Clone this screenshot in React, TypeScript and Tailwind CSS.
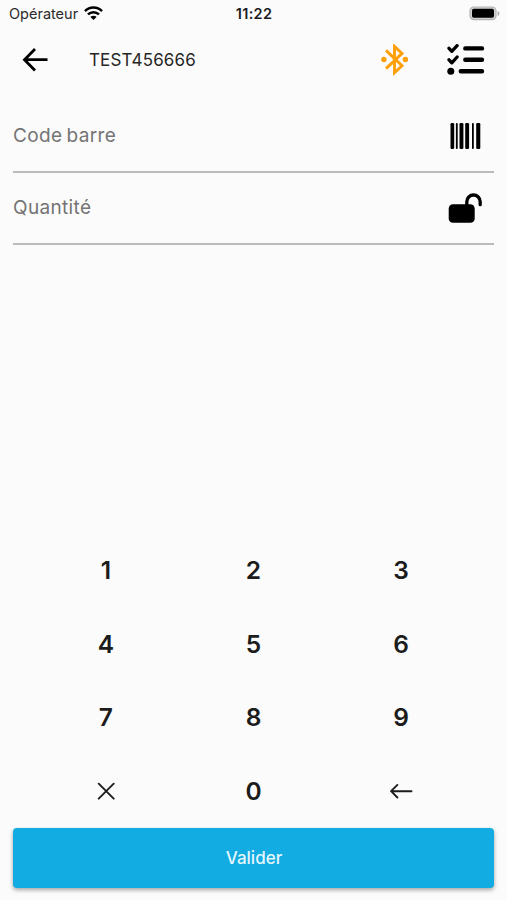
import React from 'react';

const KEYS = ['1', '2', '3', '4', '5', '6', '7', '8', '9', 'clear', '0', 'back'];

const WifiIcon = () => (
  <svg width="19" height="15" viewBox="0 0 19 15" fill="none" stroke="#000" strokeWidth="2.5">
    <path d="M1 5.1a12 12 0 0 1 17 0" />
    <path d="M4 8.4a7.8 7.8 0 0 1 11 0" />
    <path d="M6.4 11a4.3 4.3 0 0 1 6.2 0L9.5 14z" fill="#000" stroke="none" />
  </svg>
);

const BatteryIcon = () => (
  <svg width="31" height="15" viewBox="0 0 31 15">
    <rect x="1" y="1" width="26" height="12.6" rx="3.8" fill="#d2d2d2" stroke="#b4b4b4" strokeWidth="1.2" />
    <rect x="3" y="2.8" width="22" height="9" rx="1.8" fill="#000" />
    <path d="M28.6 5v5c1.3-.5 1.8-1.5 1.8-2.5s-.5-2-1.8-2.5z" fill="#a9a9a9" />
  </svg>
);

const BackIcon = () => (
  <svg width="26" height="24" viewBox="0 0 26 24" fill="none" stroke="#000" strokeWidth="2.8">
    <path d="M13 1L2.5 11.7 13 22.5M2.5 11.7H25.5" />
  </svg>
);

const BluetoothIcon = () => (
  <svg width="28" height="32" viewBox="0 0 28 32" fill="none" stroke="#ff9f0a" strokeWidth="2.9">
    <path d="M5 6.4l16 15.3-7.5 7V2.4l7.5 7L5 24.6" />
    <circle cx="2.9" cy="15.5" r="2.7" fill="#ff9f0a" stroke="none" />
    <circle cx="24.4" cy="15.5" r="2.7" fill="#ff9f0a" stroke="none" />
  </svg>
);

const ChecklistIcon = () => (
  <svg width="38" height="32" viewBox="0 0 38 32" fill="none" stroke="#000" strokeLinecap="round" strokeLinejoin="round">
    <path d="M2 4.3l2.8 3L10.1 1.7M2 15.8l2.8 3 5.3-5.8" strokeWidth="3.3" />
    <path d="M18.3 4.4H35M18.3 15.8H35M13.8 27.3H35" strokeWidth="4.4" />
    <circle cx="3.8" cy="27.3" r="3.5" fill="#000" stroke="none" />
  </svg>
);

const BarcodeIcon = () => (
  <svg width="32" height="26" viewBox="0 0 32 26" fill="#000">
    <rect x=".5" y="0" width="3.7" height="26" rx="1.2" />
    <rect x="5.9" y="0" width="1.8" height="26" rx=".8" />
    <rect x="9.5" y="0" width="3.9" height="26" rx="1.2" />
    <rect x="15.2" y="0" width="3.9" height="26" rx="1.2" />
    <rect x="22" y="0" width="1.8" height="26" rx=".8" />
    <rect x="26.2" y="0" width="4.1" height="26" rx="1.2" />
  </svg>
);

const UnlockIcon = () => (
  <svg width="34" height="30" viewBox="0 0 34 30">
    <rect x=".7" y="11.2" width="26" height="18.6" rx="4.3" fill="#000" />
    <path d="M18.8 13V8.7a6.7 6.7 0 0 1 13.4 0v3" fill="none" stroke="#000" strokeWidth="3.3" strokeLinecap="round" />
  </svg>
);

const ClearIcon = () => (
  <svg width="18" height="18" viewBox="0 0 18 18" fill="none" stroke="#1c1c1c" strokeWidth="1.9" strokeLinecap="round">
    <path d="M1.7 1.7l15 15M16.7 1.7l-15 15" />
  </svg>
);

const EraseIcon = () => (
  <svg width="24" height="16" viewBox="0 0 24 16" fill="none" stroke="#1c1c1c" strokeWidth="1.9" strokeLinecap="round" strokeLinejoin="round">
    <path d="M8.4 1.9L2.1 8.2l6.3 6.3M2.1 8.2h20.4" />
  </svg>
);

const Field: React.FC<{ label: string; children: React.ReactNode }> = ({ label, children }) => (
  <div className="h-[72px] flex items-center justify-between pr-3 border-b-2 border-[#bcbcbc]">
    <span className="pt-px text-[19px] tracking-[0.35px] [word-spacing:-1.5px] text-[#747474]">{label}</span>
    {children}
  </div>
);

const Key: React.FC<{ value: string }> = ({ value }) => (
  <button className="flex items-center justify-center text-[24.5px] font-semibold text-[#1c1c1c]">
    {value === 'clear' ? <ClearIcon /> : value === 'back' ? <EraseIcon /> : value}
  </button>
);

export default function App() {
  return (
    <div className="h-[900px] w-full flex flex-col bg-[#fbfbfb] font-['Inter',sans-serif]">
      {/* Status bar */}
      <div className="h-[27px] shrink-0 grid grid-cols-3 items-center pl-[8px] pr-[7px]">
        <div className="flex items-center gap-1.5 pl-px">
          <span className="text-[14.5px] text-[#2a2a2a]">Opérateur</span>
          <WifiIcon />
        </div>
        <span className="text-center text-[14.5px] font-semibold tracking-[0.3px] text-[#1c1c1c]">11:22</span>
        <div className="flex justify-end">
          <BatteryIcon />
        </div>
      </div>

      {/* Header */}
      <header className="h-[65px] shrink-0 flex items-center px-[22px]">
        <BackIcon />
        <h1 className="pt-0.5 ml-[41px] flex-1 text-[17px] tracking-[0.15px] text-[#262626]">TEST456666</h1>
        <BluetoothIcon />
        <div className="ml-[38px]">
          <ChecklistIcon />
        </div>
      </header>

      <div className="mt-[9px] mx-[13px]">
        <Field label="Code barre">
          <BarcodeIcon />
        </Field>
        <Field label="Quantité">
          <UnlockIcon />
        </Field>
      </div>

      {/* Keypad */}
      <div className="mt-auto mx-8 h-[294.5px] shrink-0 grid grid-cols-3 grid-rows-4">
        {KEYS.map((key) => (
          <Key key={key} value={key} />
        ))}
      </div>

      <button className="mx-[13px] mb-[12px] h-[60px] shrink-0 rounded-[4px] bg-[#12abe2] pl-px pt-px text-[17px] font-medium text-[#e3f6fd] shadow-[0_2px_4px_rgba(0,0,0,0.35)]">
        Valider
      </button>
    </div>
  );
}
